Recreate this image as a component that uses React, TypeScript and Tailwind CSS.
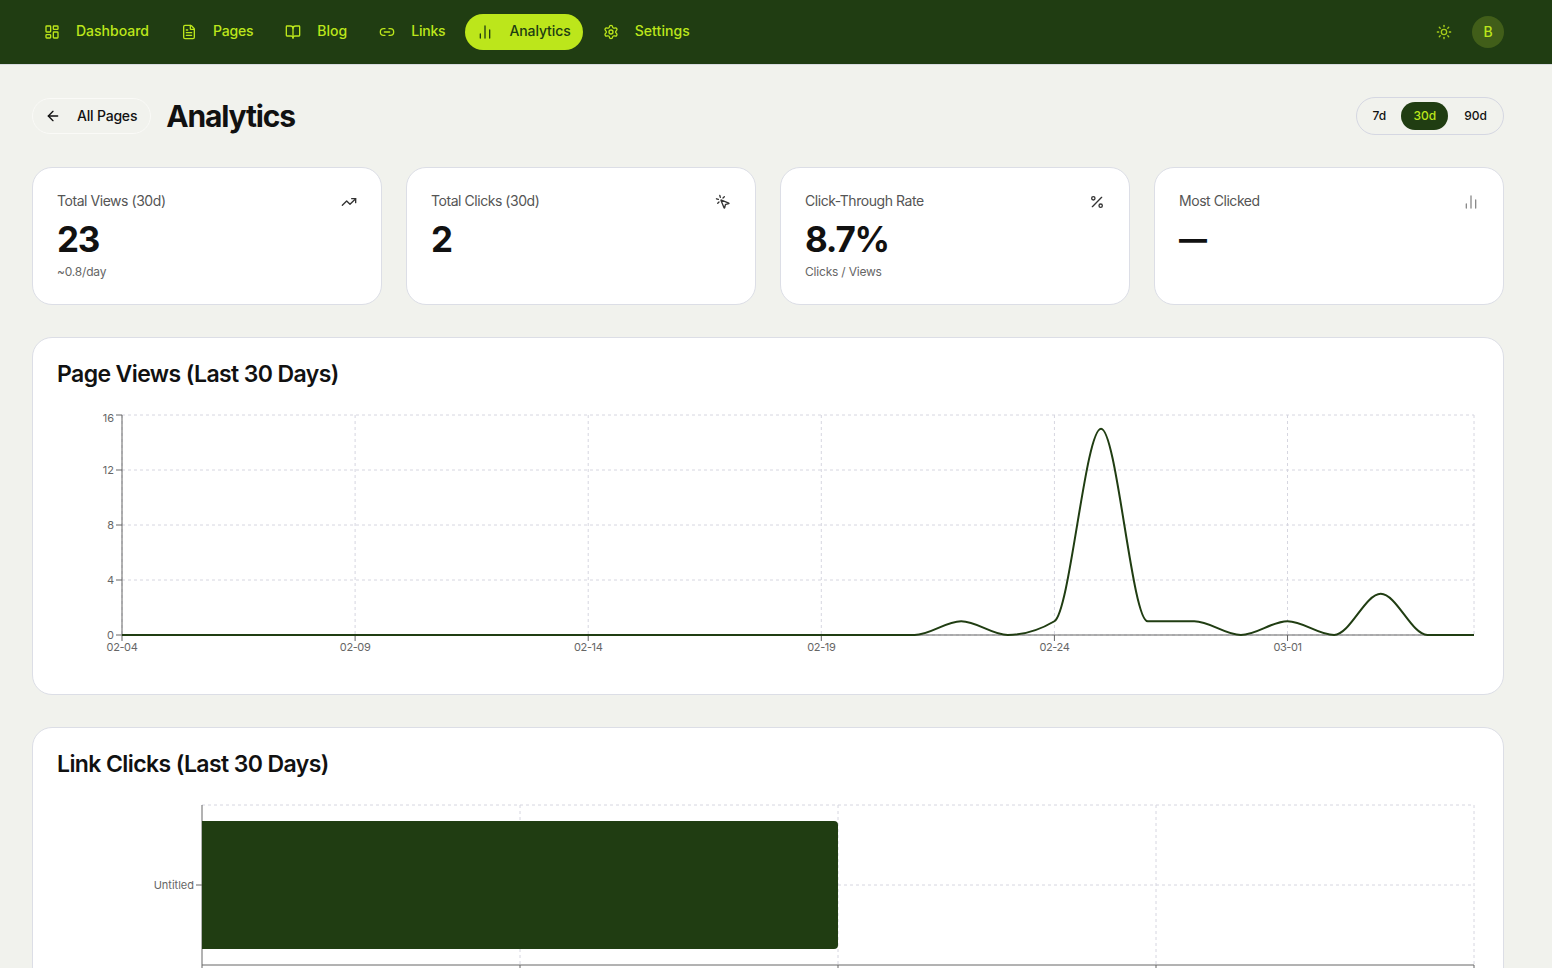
import {
  ArrowLeft,
  BookOpen,
  ChartNoAxesColumn,
  FileText,
  LayoutDashboard,
  Link2,
  MousePointerClick,
  Percent,
  Settings,
  Sun,
  TrendingUp,
} from "lucide-react";

const navItems = [
  { label: "Dashboard", icon: LayoutDashboard, tracking: "tracking-[0px]" },
  { label: "Pages", icon: FileText, tracking: "tracking-[-0.2px]" },
  { label: "Blog", icon: BookOpen, tracking: "tracking-[0px]" },
  { label: "Links", icon: Link2, tracking: "tracking-[-0.2px]" },
  { label: "Analytics", icon: ChartNoAxesColumn, tracking: "tracking-[-0.1px]", active: true },
  { label: "Settings", icon: Settings, tracking: "tracking-[0.1px]" },
];

const stats = [
  { label: "Total Views (30d)", value: "23", note: "~0.8/day", icon: TrendingUp, iconClass: "text-[#333]" },
  { label: "Total Clicks (30d)", value: "2", note: "", icon: MousePointerClick, iconClass: "text-[#333]" },
  { label: "Click-Through Rate", value: "8.7%", note: "Clicks / Views", icon: Percent, iconClass: "text-[#333]" },
  { label: "Most Clicked", value: "—", note: "", icon: ChartNoAxesColumn, iconClass: "text-[#8a8a8a]" },
];

const views = [0, 0, 0, 0, 0, 0, 0, 0, 0, 0, 0, 0, 0, 0, 0, 0, 0, 0, 1, 0, 1, 15, 1, 1, 0, 1, 0, 3, 0, 0];

// same curve as d3 curveMonotoneX, which is what the chart lib draws
function monotonePath(pts: [number, number][]) {
  const n = pts.length;
  const sign = (v: number) => (v < 0 ? -1 : 1);
  const dx = pts.slice(1).map((p, i) => p[0] - pts[i][0]);
  const s = pts.slice(1).map((p, i) => (p[1] - pts[i][1]) / dx[i]);
  const t: number[] = new Array(n).fill(0);
  for (let i = 1; i < n - 1; i++) {
    const p = (s[i - 1] * dx[i] + s[i] * dx[i - 1]) / (dx[i - 1] + dx[i]);
    t[i] = (sign(s[i - 1]) + sign(s[i])) * Math.min(Math.abs(s[i - 1]), Math.abs(s[i]), 0.5 * Math.abs(p)) || 0;
  }
  t[0] = (3 * s[0] - t[1]) / 2;
  t[n - 1] = (3 * s[n - 2] - t[n - 2]) / 2;
  let d = `M${pts[0][0]},${pts[0][1]}`;
  for (let i = 0; i < n - 1; i++) {
    const h = dx[i] / 3;
    d += `C${pts[i][0] + h},${pts[i][1] + h * t[i]} ${pts[i + 1][0] - h},${pts[i + 1][1] - h * t[i + 1]} ${pts[i + 1][0]},${pts[i + 1][1]}`;
  }
  return d;
}

function ViewsChart() {
  const x = (i: number) => 122 + (1352 / 29) * i;
  const y = (v: number) => 635 - v * 13.75;
  const xTicks = [
    { i: 0, label: "02-04" },
    { i: 5, label: "02-09" },
    { i: 10, label: "02-14" },
    { i: 15, label: "02-19" },
    { i: 20, label: "02-24" },
    { i: 25, label: "03-01" },
  ];
  const yTicks = [0, 4, 8, 12, 16];
  const line = monotonePath(views.map((v, i) => [x(i), y(v)]));
  return (
    <svg className="block" width="1422" height="265" viewBox="57 405 1422 265" fontFamily="Inter, sans-serif" fontSize="11">
      <g stroke="#d6d6e0" strokeDasharray="3 3" fill="none">
        {yTicks.map((t) => (
          <line key={t} x1="122" x2="1474" y1={y(t)} y2={y(t)} />
        ))}
        {xTicks.map((t) => (
          <line key={t.i} x1={x(t.i)} x2={x(t.i)} y1="415" y2="635" />
        ))}
        <line x1="1474" x2="1474" y1="415" y2="635" />
      </g>
      <line x1="122" x2="122" y1="415" y2="635" stroke="#666" />
      <line x1="122" x2="1474" y1="635" y2="635" stroke="#666" />
      {yTicks.map((t) => (
        <g key={t}>
          <line x1="116" x2="122" y1={y(t)} y2={y(t)} stroke="#666" />
          <text x="114" y={t === 16 ? 422 : y(t) + 4} textAnchor="end" fill="#666">
            {t}
          </text>
        </g>
      ))}
      {xTicks.map((t) => (
        <g key={t.i}>
          <line x1={x(t.i)} x2={x(t.i)} y1="635" y2="641" stroke="#666" />
          <text x={x(t.i)} y="651" textAnchor="middle" fill="#666" letterSpacing="-0.4">
            {t.label}
          </text>
        </g>
      ))}
      <path d={line} fill="none" stroke="#203d12" strokeWidth="2" />
    </svg>
  );
}

function ClicksChart() {
  const xTicks = [202, 520, 838, 1156, 1474];
  return (
    <svg className="block" width="1422" height="265" viewBox="57 795 1422 265" fontFamily="Inter, sans-serif" fontSize="11">
      <g stroke="#d6d6e0" strokeDasharray="3 3" fill="none">
        <line x1="202" x2="1474" y1="805" y2="805" />
        <line x1="202" x2="1474" y1="885" y2="885" />
        {xTicks.slice(1).map((t) => (
          <line key={t} x1={t} x2={t} y1="805" y2="965" />
        ))}
      </g>
      <line x1="202" x2="202" y1="805" y2="965" stroke="#666" />
      <line x1="202" x2="1474" y1="965" y2="965" stroke="#666" />
      <line x1="196" x2="202" y1="885" y2="885" stroke="#666" />
      <text x="194" y="889" textAnchor="end" fill="#666">
        Untitled
      </text>
      {xTicks.map((t) => (
        <line key={t} x1={t} x2={t} y1="965" y2="971" stroke="#666" />
      ))}
      <path d="M202,821H834a4,4 0 0 1 4,4V945a4,4 0 0 1 -4,4H202Z" fill="#203d12" />
    </svg>
  );
}

export default function App() {
  return (
    <div className="h-screen overflow-hidden bg-[#f1f2ed] text-[#111] font-['Inter',sans-serif]">
      <header className="h-[65px] flex items-center justify-between bg-[#203d12] pl-8 pr-12 border-b border-[#d9dbe0]">
        <nav className="flex items-center gap-2">
          {navItems.map(({ label, icon: Icon, tracking, active }) => (
            <a
              key={label}
              className={`h-9 flex items-center gap-4 px-3 rounded-full text-sm font-medium ${tracking} ${
                active ? "bg-[#bce61b] text-[#203d12]" : "text-[#bce61b]"
              }`}
            >
              <Icon size={16} strokeWidth={2} />
              <span className="mb-0.5">{label}</span>
            </a>
          ))}
        </nav>
        <div className="flex items-center gap-5">
          <Sun size={16} strokeWidth={2} className="text-[#a6cc1a]" />
          <div className="w-8 h-8 rounded-full bg-[#415e19] text-[#bce61b] text-sm font-medium flex items-center justify-center">
            B
          </div>
        </div>
      </header>

      <main className="pl-8 pr-12 pt-8">
        <div className="h-[38px] mb-8 flex items-center justify-between">
          <div className="flex items-center gap-[15px]">
            <a className="h-9 flex items-center gap-4 pl-3 pr-[13px] rounded-full border border-[#fafaf7] text-sm font-medium tracking-[-0.2px]">
              <ArrowLeft size={16} strokeWidth={2} />
              All Pages
            </a>
            <h1 className="text-3xl font-bold tracking-[-1.15px]">Analytics</h1>
          </div>
          <div className="flex items-center gap-1 p-1 rounded-full border border-[#d5d7e2] text-xs font-medium">
            <button className="h-7 pl-3 pr-[11px] rounded-full">7d</button>
            <button className="h-7 w-[47px] rounded-full bg-[#203d12] text-[#bce61b]">30d</button>
            <button className="h-7 px-3 rounded-full">90d</button>
          </div>
        </div>

        <div className="grid grid-cols-4 gap-6 mb-8">
          {stats.map(({ label, value, note, icon: Icon, iconClass }) => (
            <div key={label} className="bg-white rounded-[20px] border border-[#dcdee6] p-6">
              <div className="h-5 flex items-center justify-between">
                <span className="mb-0.5 text-sm text-[#555] tracking-[-0.45px]">{label}</span>
                <Icon size={16} strokeWidth={2} className={iconClass} />
              </div>
              <div
                className={`mt-2 h-10 leading-[38px] tracking-[-1.2px] ${
                  value === "—" ? "text-[28px] font-extrabold" : "text-[35px] font-bold"
                }`}
              >
                {value}
              </div>
              {note && <div className="mt-1 h-4 text-xs leading-4 text-[#666] tracking-[-0.2px]">{note}</div>}
            </div>
          ))}
        </div>

        <section className="bg-white rounded-[20px] border border-[#dcdee6] p-6 mb-8">
          <h2 className="h-8 mb-[11px] text-[23px] leading-6 font-semibold tracking-[-0.6px]">Page Views (Last 30 Days)</h2>
          <ViewsChart />
        </section>

        <section className="bg-white rounded-[20px] border border-[#dcdee6] p-6">
          <h2 className="h-8 mb-[11px] text-[23px] leading-6 font-semibold tracking-[-0.6px]">Link Clicks (Last 30 Days)</h2>
          <ClicksChart />
        </section>
      </main>
    </div>
  );
}
